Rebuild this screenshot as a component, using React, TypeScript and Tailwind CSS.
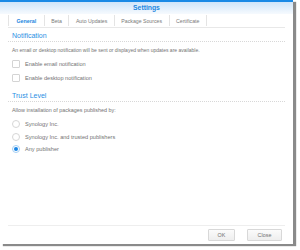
import React from "react";

function Checkbox({ label }: { label: string }) {
  return (
    <div className="flex items-center h-[8px]">
      <div className="w-[8px] h-[8px] border border-[#d4d4d4] bg-white rounded-[1px]" />
      <span className="ml-[5px] text-[5.6px] leading-[8px] text-[#737373]">{label}</span>
    </div>
  );
}

function Radio({ label, checked }: { label: string; checked?: boolean }) {
  return (
    <div className="flex items-center h-[8px]">
      <div
        className={
          checked
            ? "w-[8px] h-[8px] rounded-full border border-[#a5cff4] bg-white flex items-center justify-center"
            : "w-[8px] h-[8px] rounded-full border border-[#d6d6d6] bg-white"
        }
      >
        {checked ? <div className="w-[4px] h-[4px] rounded-full bg-[#1a86e6]" /> : null}
      </div>
      <span className="ml-[5px] text-[5.6px] leading-[8px] text-[#737373]">{label}</span>
    </div>
  );
}

export default function App() {
  const tabs = ["General", "Beta", "Auto Updates", "Package Sources", "Certificate"];
  return (
    <div
      className="w-[300px] h-[250px] bg-white relative"
      style={{ fontFamily: '"Liberation Sans", Arial, sans-serif' }}
    >
      <div className="w-[293px] h-[244px] bg-white border-t-2 border-[#1a8ae6] shadow-[3px_2px_1px_#8a8a8a] flex flex-col">
        <div className="h-[12px] bg-gradient-to-b from-[#cfe5fa] to-[#f6fafe] flex items-center justify-center">
          <span className="text-[6.8px] font-bold text-[#1a86e0] leading-[10px]">Settings</span>
        </div>
        <div className="h-[14px] mx-[8px] border-b border-[#e8e8e8] flex items-center">
          <div className="h-[11px] border-l border-[#e4e4e4]" />
          {tabs.map((t, i) => (
            <div key={t} className="flex items-center">
              <span
                className={
                  i === 0
                    ? "px-[7.5px] text-[5.3px] leading-[10px] font-bold text-[#1a86e0]"
                    : "px-[6.5px] text-[5.2px] leading-[10px] text-[#7a7a7a]"
                }
              >
                {t}
              </span>
              <div className="h-[11px] border-l border-[#e4e4e4]" />
            </div>
          ))}
        </div>
        <div className="mx-[8px] flex flex-col flex-1">
          <div className="h-[14px] pt-[3px] border-b border-dotted border-[#d8d8d8] pl-[4px]">
            <div className="text-[7px] leading-[10px] text-[#2a8fe4]">Notification</div>
          </div>
          <div className="pl-[4px] mt-[4px] text-[5px] leading-[8px] text-[#737373]">
            An email or desktop notification will be sent or displayed when updates are available.
          </div>
          <div className="pl-[4px] mt-[6px] flex flex-col gap-[6px]">
            <Checkbox label="Enable email notification" />
            <Checkbox label="Enable desktop notification" />
          </div>
          <div className="mt-[6px] h-[14px] pt-[3px] border-b border-dotted border-[#d8d8d8] pl-[4px]">
            <div className="text-[7px] leading-[10px] text-[#2a8fe4]">Trust Level</div>
          </div>
          <div className="pl-[4px] mt-[4px] text-[5.4px] leading-[8px] text-[#737373]">
            Allow installation of packages published by:
          </div>
          <div className="pl-[4px] mt-[6px] flex flex-col">
            <Radio label="Synology Inc." />
            <div className="mt-[5px]">
              <Radio label="Synology Inc. and trusted publishers" />
            </div>
            <div className="mt-[4px]">
              <Radio label="Any publisher" checked />
            </div>
          </div>
          <div className="flex-1" />
          <div className="border-t border-[#eeeeee] pt-[3px] pb-[3px] flex justify-end pr-[3px] gap-[12px]">
            <div className="w-[27px] h-[12px] border border-[#d8d8d8] rounded-[1px] bg-gradient-to-b from-[#fbfbfb] to-[#eeeeee] flex items-center justify-center">
              <span className="text-[5.4px] leading-[8px] text-[#707070]">OK</span>
            </div>
            <div className="w-[35px] h-[12px] border border-[#d8d8d8] rounded-[1px] bg-gradient-to-b from-[#fbfbfb] to-[#eeeeee] flex items-center justify-center">
              <span className="text-[5.4px] leading-[8px] text-[#707070]">Close</span>
            </div>
          </div>
        </div>
      </div>
    </div>
  );
}
